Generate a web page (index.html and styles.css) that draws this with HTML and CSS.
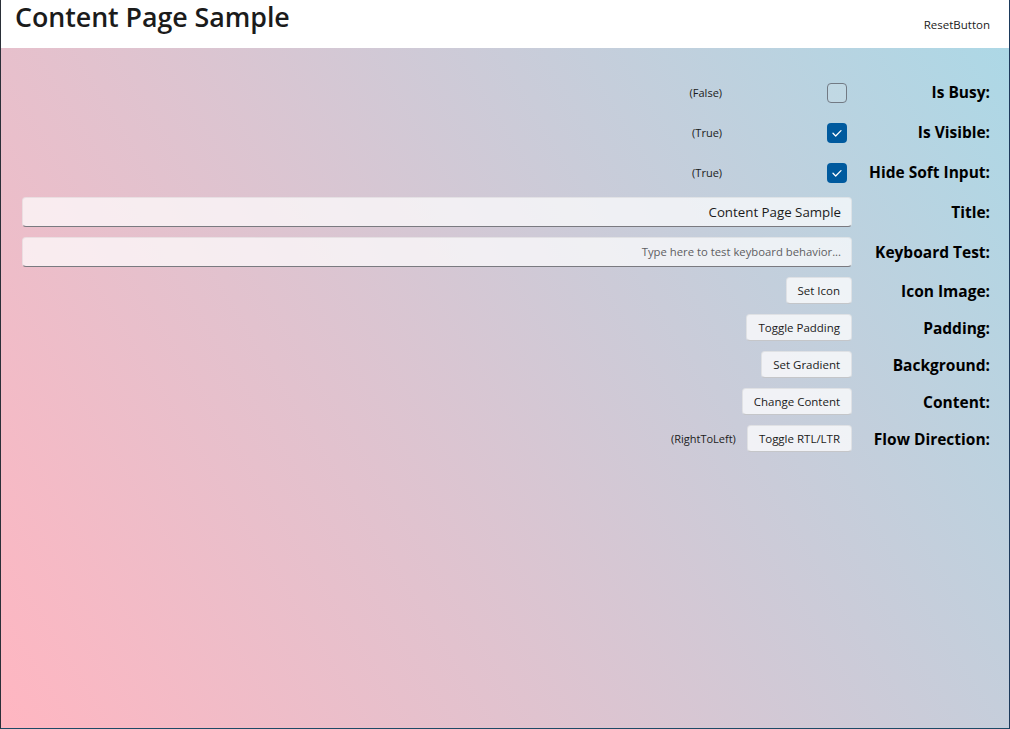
FILE: index.html
```html
<!DOCTYPE html>
<html>
<head>
<meta charset="utf-8">
<link rel="stylesheet" href="styles.css">
</head>
<body>
<div class="window">
  <header class="topbar">
    <h1 class="page-title">Content Page Sample</h1>
    <span class="reset">ResetButton</span>
  </header>
  <main class="content">
    <div class="form">
      <div class="ctrl">
        <span class="value">(False)</span>
        <span class="check"></span>
      </div>
      <div class="label">Is Busy:</div>

      <div class="ctrl">
        <span class="value">(True)</span>
        <span class="check on"><svg viewBox="0 0 20 20" width="20" height="20"><path d="M6 10.3 L8.7 13 L14 7.6" fill="none" stroke="#fff" stroke-width="1.3" stroke-linecap="round" stroke-linejoin="round"/></svg></span>
      </div>
      <div class="label">Is Visible:</div>

      <div class="ctrl">
        <span class="value">(True)</span>
        <span class="check on"><svg viewBox="0 0 20 20" width="20" height="20"><path d="M6 10.3 L8.7 13 L14 7.6" fill="none" stroke="#fff" stroke-width="1.3" stroke-linecap="round" stroke-linejoin="round"/></svg></span>
      </div>
      <div class="label">Hide Soft Input:</div>

      <div class="ctrl">
        <div class="entry">Content Page Sample</div>
      </div>
      <div class="label">Title:</div>

      <div class="ctrl">
        <div class="entry placeholder">Type here to test keyboard behavior...</div>
      </div>
      <div class="label">Keyboard Test:</div>

      <div class="ctrl"><span class="btn">Set Icon</span></div>
      <div class="label">Icon Image:</div>

      <div class="ctrl"><span class="btn">Toggle Padding</span></div>
      <div class="label">Padding:</div>

      <div class="ctrl"><span class="btn">Set Gradient</span></div>
      <div class="label">Background:</div>

      <div class="ctrl"><span class="btn">Change Content</span></div>
      <div class="label">Content:</div>

      <div class="ctrl">
        <span class="value flow">(RightToLeft)</span>
        <span class="btn">Toggle RTL/LTR</span>
      </div>
      <div class="label">Flow Direction:</div>
    </div>
  </main>
</div>
</body>
</html>
```

FILE: styles.css
```css
html, body {
  margin: 0;
  padding: 0;
}
body {
  font-family: "Open Sans", "Noto Sans", sans-serif;
  color: #1b1b1b;
  width: 1010px;
  height: 729px;
  overflow: hidden;
}
.window {
  box-sizing: border-box;
  width: 1010px;
  height: 729px;
  display: flex;
  flex-direction: column;
  border-left: 1px solid #2a2f38;
  border-right: 1px solid #1d3a5c;
  border-bottom: 1px solid #1d4a66;
}
.topbar {
  height: 48px;
  flex: none;
  background: #fff;
  display: flex;
  align-items: flex-start;
  justify-content: space-between;
  padding: 0 19px 0 14px;
}
.page-title {
  margin: 0;
  font-size: 26.8px;
  font-weight: 600;
  line-height: 34px;
  color: #1b1b1b;
  letter-spacing: -0.05px;
}
.reset {
  font-size: 11.5px;
  margin-top: 17px;
  color: #1b1b1b;
}
.content {
  flex: 1;
  background: linear-gradient(58deg, #ffb6c1, #add8e6);
  padding: 29px 19px 0 21px;
}
.form {
  display: grid;
  grid-template-columns: 1fr auto;
  column-gap: 17px;
  row-gap: 10px;
  grid-auto-rows: auto;
}
.ctrl {
  display: flex;
  justify-content: flex-end;
  align-items: center;
  min-height: 27px;
}
.label {
  align-self: center;
  text-align: right;
  font-weight: 700;
  font-size: 15.5px;
  color: #000;
}
.value {
  font-size: 11px;
  margin-right: 105px;
}
.value.flow {
  margin-right: 11px;
}
.check {
  box-sizing: border-box;
  width: 20px;
  height: 20px;
  margin: 6px 5px 4px 0;
  border-radius: 4px;
  border: 1px solid #727a84;
  background: rgba(255, 255, 255, 0.12);
  display: block;
}
.check.on {
  border: none;
  background: #005a9e;
}
.check svg { display: block; }
.entry {
  box-sizing: border-box;
  width: 100%;
  height: 30px;
  border-radius: 4px;
  background: rgba(255, 255, 255, 0.7);
  border: 1px solid rgba(0, 0, 0, 0.06);
  border-bottom: 1px solid #7a7a80;
  text-align: right;
  padding: 0 10px;
  font-size: 13.3px;
  line-height: 28px;
}
.entry.placeholder {
  font-size: 11.3px;
  color: #5e5e62;
}
.btn {
  box-sizing: border-box;
  height: 27px;
  padding: 0 11px;
  border-radius: 4px;
  background: rgba(251, 251, 252, 0.8);
  border: 1px solid rgba(0, 0, 0, 0.07);
  border-bottom-color: rgba(0, 0, 0, 0.18);
  font-size: 11.5px;
  line-height: 25px;
  color: #1b1b1b;
  white-space: nowrap;
}
```
